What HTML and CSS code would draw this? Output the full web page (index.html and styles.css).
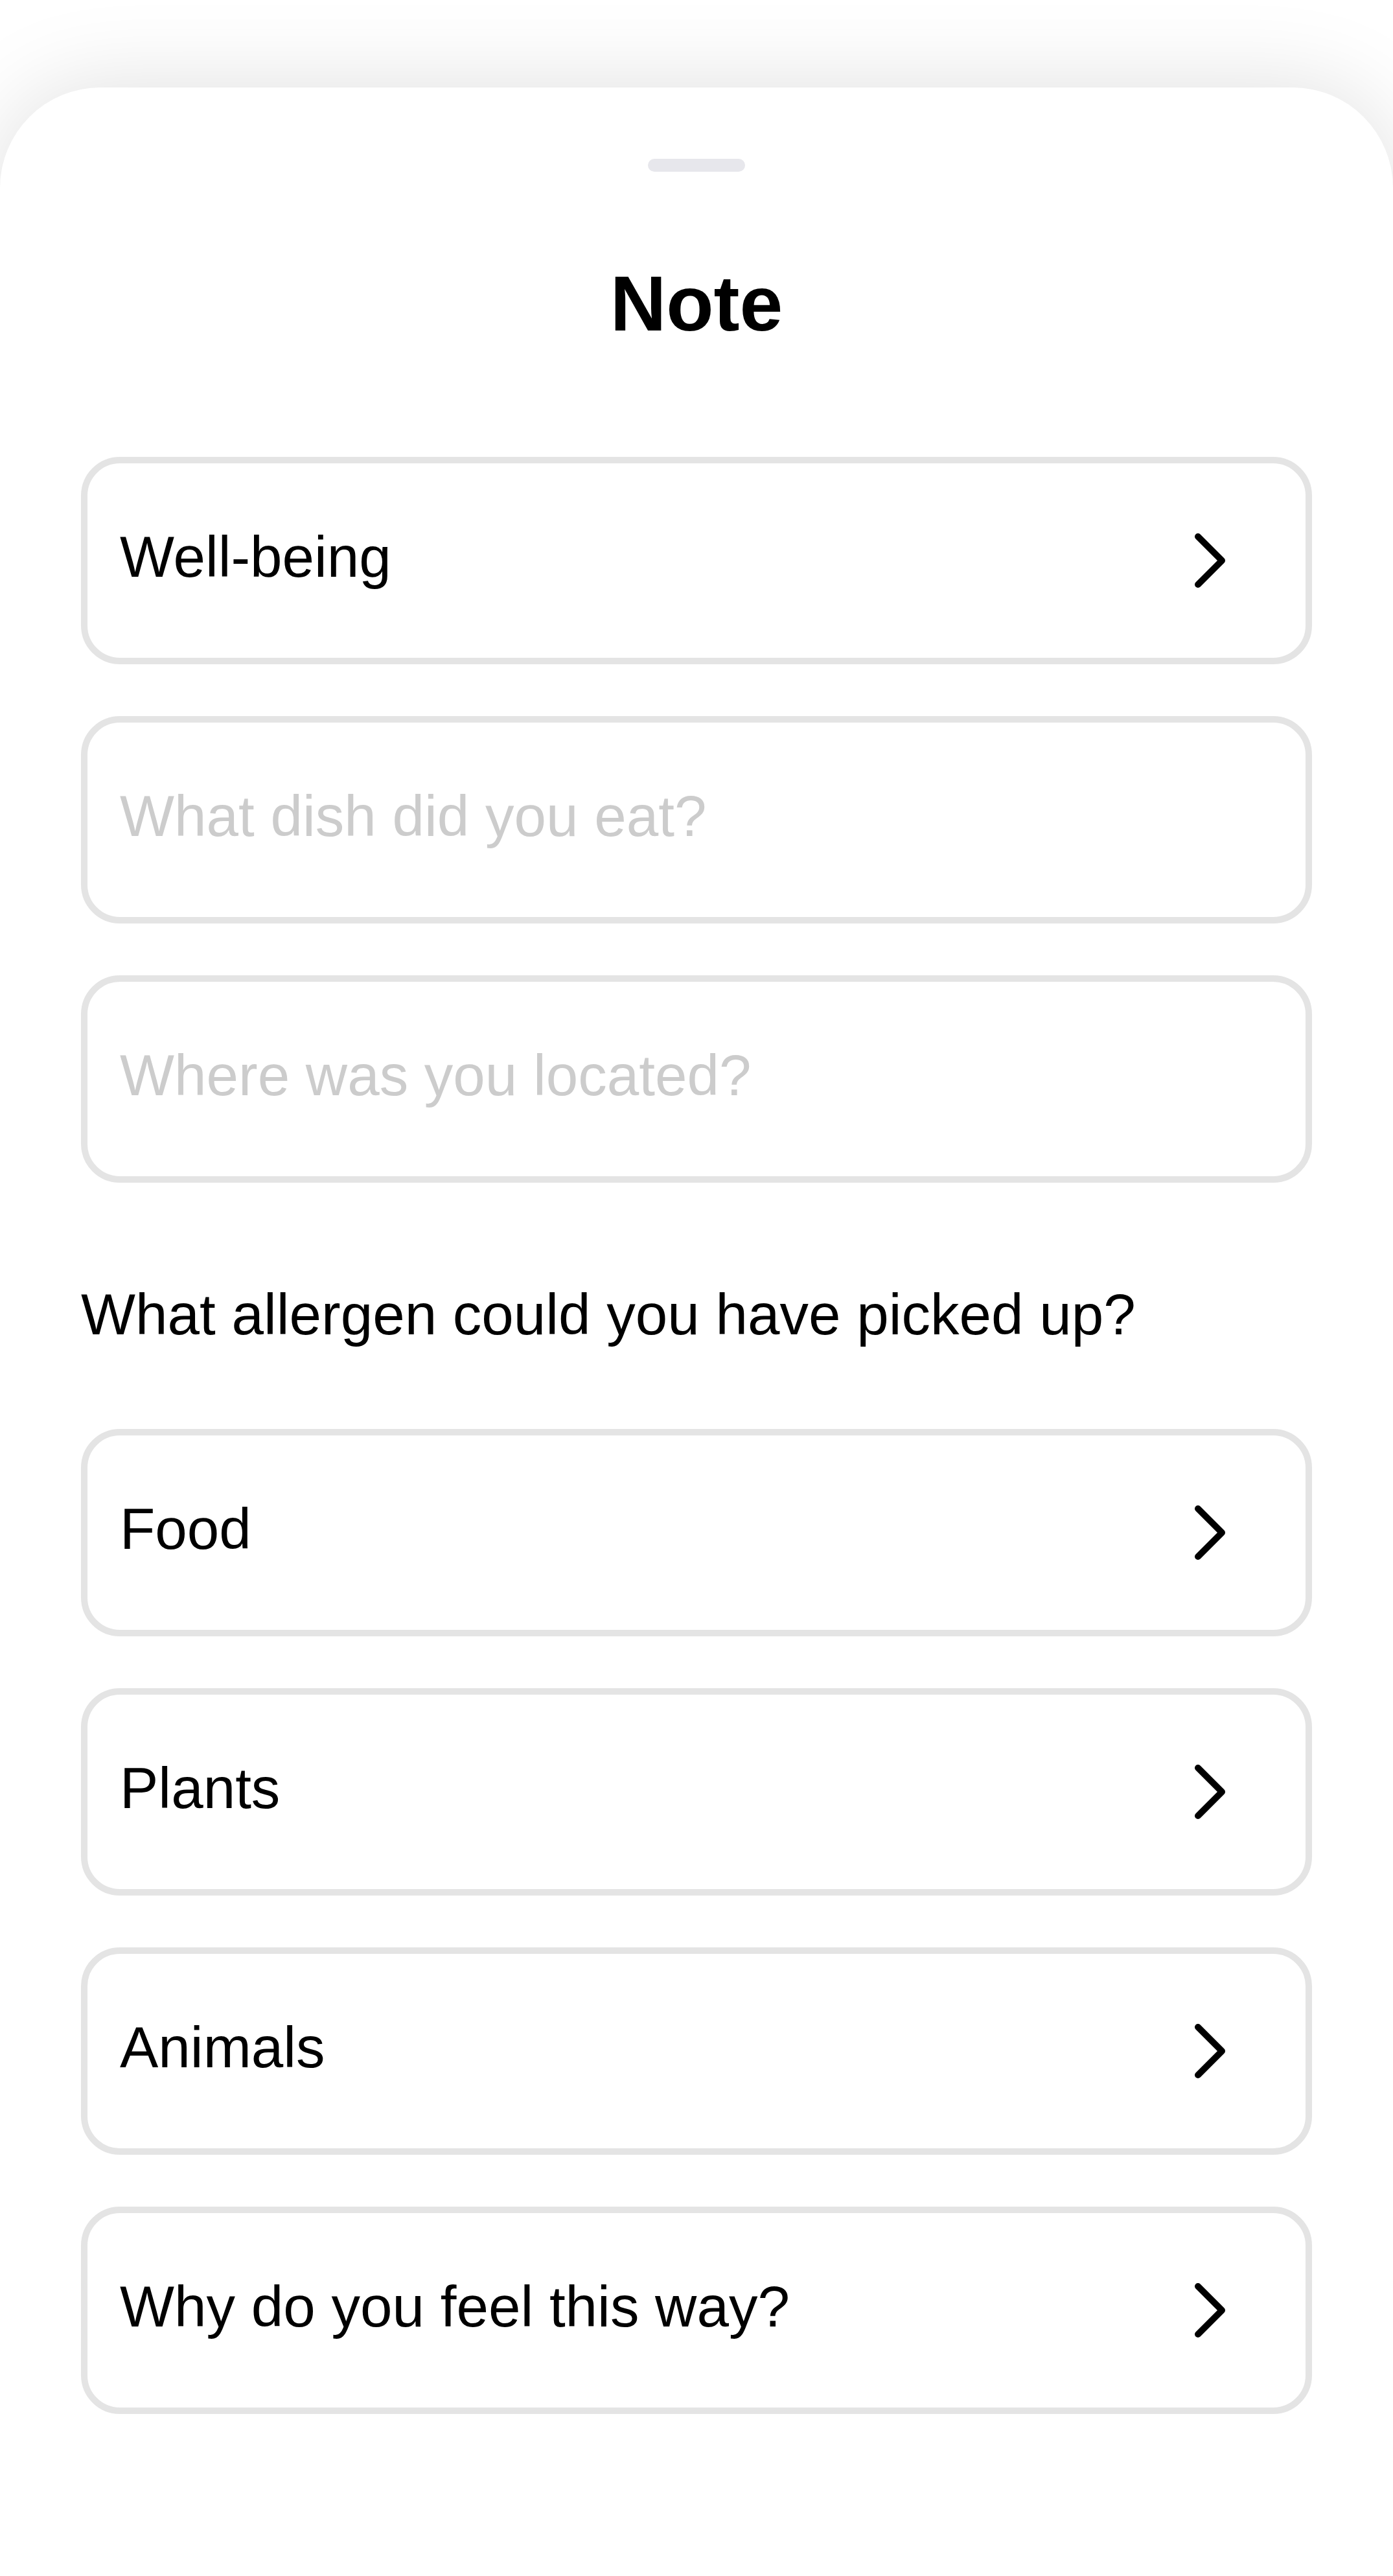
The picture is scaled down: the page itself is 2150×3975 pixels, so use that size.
FILE: index.html
```html
<!DOCTYPE html>
<html lang="en">
<head>
<meta charset="utf-8">
<title>Note</title>
<link rel="stylesheet" href="styles.css">
</head>
<body>
<main class="sheet">
  <div class="handle"></div>
  <h1 class="title">Note</h1>

  <section class="group group-top">
    <div class="card">
      <span class="card-text">Well-being</span>
      <svg class="chevron" width="60" height="100" viewBox="0 0 60 100"><path d="M9 13 L46 50 L9 87" /></svg>
    </div>
    <div class="card">
      <span class="card-text placeholder">What dish did you eat?</span>
    </div>
    <div class="card">
      <span class="card-text placeholder">Where was you located?</span>
    </div>
  </section>

  <p class="question">What allergen could you have picked up?</p>

  <section class="group group-bottom">
    <div class="card">
      <span class="card-text">Food</span>
      <svg class="chevron" width="60" height="100" viewBox="0 0 60 100"><path d="M9 13 L46 50 L9 87" /></svg>
    </div>
    <div class="card">
      <span class="card-text">Plants</span>
      <svg class="chevron" width="60" height="100" viewBox="0 0 60 100"><path d="M9 13 L46 50 L9 87" /></svg>
    </div>
    <div class="card">
      <span class="card-text">Animals</span>
      <svg class="chevron" width="60" height="100" viewBox="0 0 60 100"><path d="M9 13 L46 50 L9 87" /></svg>
    </div>
    <div class="card">
      <span class="card-text">Why do you feel this way?</span>
      <svg class="chevron" width="60" height="100" viewBox="0 0 60 100"><path d="M9 13 L46 50 L9 87" /></svg>
    </div>
  </section>
</main>
</body>
</html>
```

FILE: styles.css
```css
html, body {
  margin: 0;
  padding: 0;
  background: #ffffff;
  overflow: hidden;
}

body {
  font-family: "Liberation Sans", Arial, sans-serif;
  color: #000000;
  height: 3975px;
}

.sheet {
  box-sizing: border-box;
  margin-top: 135px;
  height: 3840px;
  background: #ffffff;
  border-radius: 155px 155px 0 0;
  box-shadow: 0 0 140px rgba(0, 0, 0, 0.13);
  padding: 110px 125px 0;
  display: flex;
  flex-direction: column;
}

.handle {
  width: 150px;
  height: 20px;
  border-radius: 10px;
  background: #e7e7ec;
  align-self: center;
}

.title {
  margin: 143px 0 0;
  font-size: 120px;
  line-height: 120px;
  font-weight: 700;
  text-align: center;
}

.group {
  display: flex;
  flex-direction: column;
  gap: 80px;
}

.group-top {
  margin-top: 177px;
}

.group-bottom {
  margin-top: 127px;
}

.card {
  box-sizing: border-box;
  height: 320px;
  border: 10px solid #e4e4e4;
  border-radius: 60px;
  display: flex;
  align-items: center;
  justify-content: space-between;
  padding: 0 115px 0 50px;
}

.card-text {
  font-size: 89px;
  line-height: 100px;
  padding-bottom: 12px;
  white-space: nowrap;
}

.placeholder {
  color: #cccccc;
}

.chevron {
  display: block;
  flex: none;
}

.chevron path {
  fill: none;
  stroke: #000000;
  stroke-width: 10;
  stroke-linecap: round;
  stroke-linejoin: round;
}

.question {
  margin: 153px 0 0;
  font-size: 89px;
  line-height: 100px;
}
```
